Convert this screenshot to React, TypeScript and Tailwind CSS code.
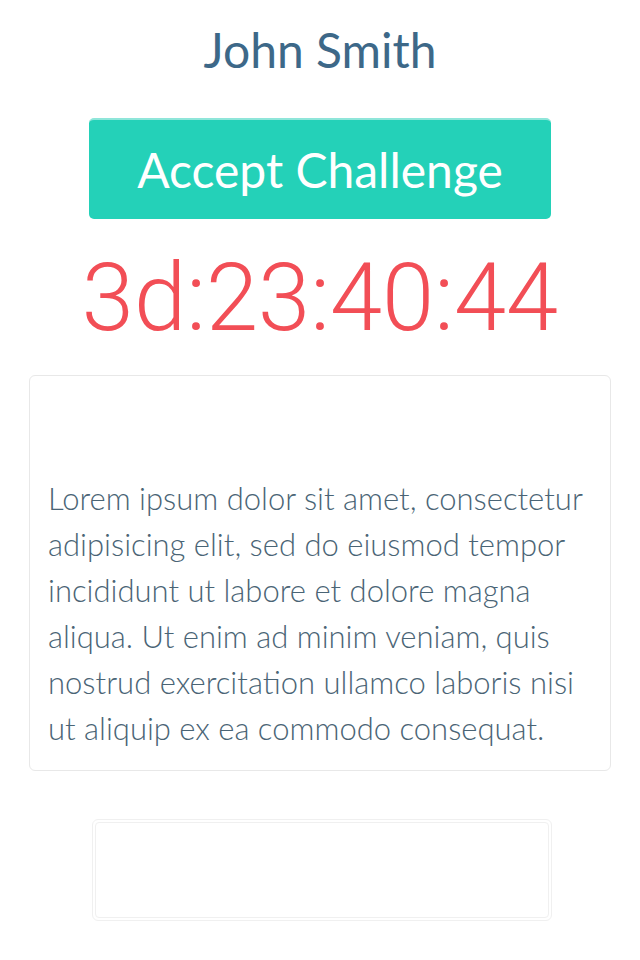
import React from "react";

export default function App() {
  return (
    <div className="min-h-[960px] w-[640px] bg-white flex flex-col items-center" style={{ fontFamily: "Lato, 'Open Sans', sans-serif" }}>
      <h1 className="mt-[18px] text-[48px] leading-[64px] text-[#3d6888] font-normal">John Smith</h1>
      <button className="mt-[36px] w-[462px] h-[101px] rounded-[5px] bg-[#24d1b8] border-t-2 border-[#8fe6da] text-white text-[48px] leading-none flex items-center justify-center">
        Accept Challenge
      </button>
      <div className="mt-[24px] text-[94px] leading-[110px] font-light text-[#f24e56]" style={{ fontFamily: "'Roboto Light', Roboto, sans-serif" }}>
        3d:23:40:44
      </div>
      <div className="mt-[22px] w-[582px] rounded-[6px] border border-[#e8e8e8] px-[18px] pt-[99px] pb-[19px]">
        <p className="text-[31px] leading-[46px] font-light text-[#4a6475]" style={{ fontFamily: "'Lato Light', Lato, sans-serif" }}>
          Lorem ipsum dolor sit amet, consectetur adipisicing elit, sed do eiusmod tempor incididunt ut labore et dolore magna aliqua. Ut enim ad minim veniam, quis nostrud exercitation ullamco laboris nisi ut aliquip ex ea commodo consequat.
        </p>
      </div>
      <div className="mt-[48px] ml-[4px] w-[460px] h-[102px] rounded-[6px] border border-[#f0f0f0] p-[2px] flex">
        <div className="flex-1 rounded-[4px] border border-[#f0f0f0]" />
      </div>
    </div>
  );
}
